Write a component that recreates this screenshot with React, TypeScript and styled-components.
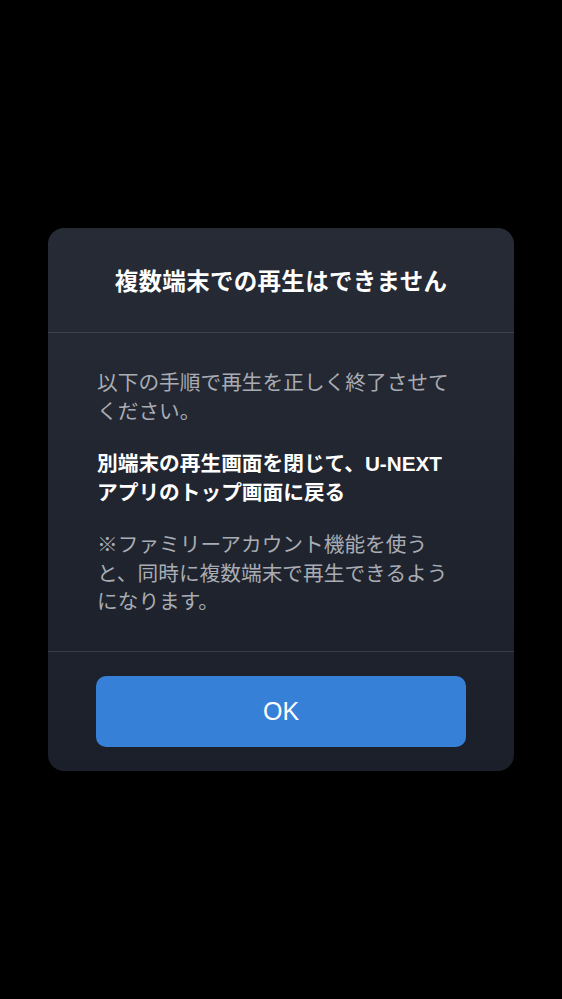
import * as React from 'react';
import styled, { createGlobalStyle } from 'styled-components';

const GlobalStyle = createGlobalStyle`
  html, body {
    margin: 0;
    padding: 0;
    background: #000;
  }
  body {
    font-family: 'Liberation Sans', 'Noto Sans CJK JP', sans-serif;
  }
`;

const App = () => {
  return (
    <>
      <GlobalStyle />
      <Screen>
        <Dialog>
          <Header>
            <Title>複数端末での再生はできません</Title>
          </Header>

          <Body>
            <Text>
              以下の手順で再生を正しく終了させて
              <br />
              ください。
            </Text>
            <Text $strong>
              別端末の再生画面を閉じて、U-NEXT
              <br />
              アプリのトップ画面に戻る
            </Text>
            <Text>
              ※ファミリーアカウント機能を使う
              <br />
              と、同時に複数端末で再生できるよう
              <br />
              になります。
            </Text>
          </Body>

          <Footer>
            <OkButton type="button">OK</OkButton>
          </Footer>
        </Dialog>
      </Screen>
    </>
  );
};

const Screen = styled.div`
  width: 562px;
  height: 999px;
  display: flex;
  align-items: center;
  justify-content: center;
  background: #000;
`;

const Dialog = styled.div`
  width: 466px;
  border-radius: 16px;
  overflow: hidden;
  background: linear-gradient(180deg, #262b36 0%, #1a1f29 100%);
  display: flex;
  flex-direction: column;
`;

const Header = styled.div`
  height: 105px;
  display: flex;
  align-items: center;
  justify-content: center;
  border-bottom: 1px solid #3b404b;
  box-sizing: border-box;
`;

const Title = styled.h1`
  margin: 0;
  color: #fff;
  font-size: 23.5px;
  font-weight: 700;
  letter-spacing: 0.3px;
`;

const Body = styled.div`
  padding: 36px 40px 34px 49px;
  display: flex;
  flex-direction: column;
  gap: 24px;
  border-bottom: 1px solid #363b46;
`;

const Text = styled.p<{ $strong?: boolean }>`
  margin: 0;
  font-size: 20.7px;
  line-height: 28.5px;
  white-space: nowrap;
  color: ${p => (p.$strong ? '#ffffff' : '#a9acb3')};
  font-weight: ${p => (p.$strong ? 700 : 400)};
`;

const Footer = styled.div`
  padding: 24px 48px;
  display: flex;
`;

const OkButton = styled.button`
  flex: 1;
  height: 71px;
  border: none;
  border-radius: 10px;
  background: #3780d8;
  color: #fff;
  font-family: 'Liberation Sans', 'Noto Sans CJK JP', sans-serif;
  font-size: 25px;
  font-weight: 400;
  cursor: pointer;
`;

export default App;
